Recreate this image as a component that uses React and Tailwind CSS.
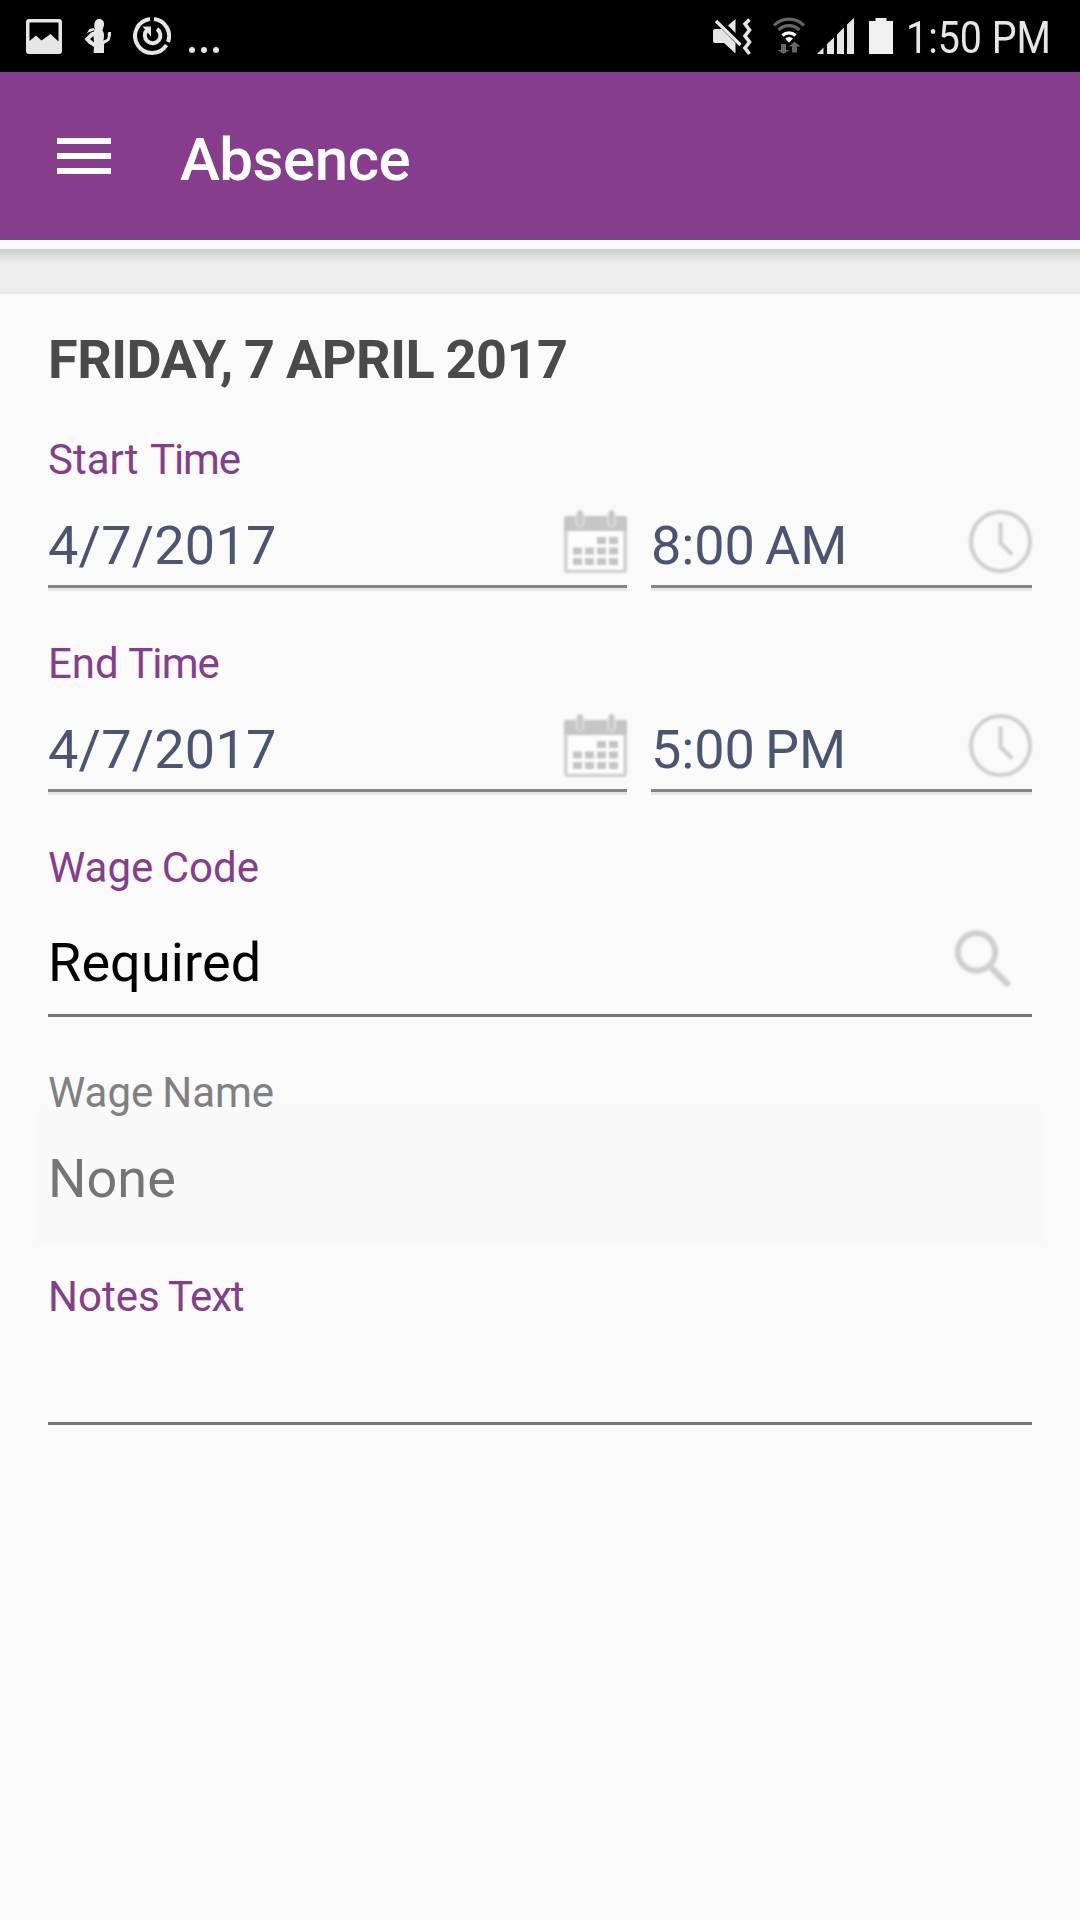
import React, { useState } from 'react'

const ImageIcon = () => (
    <svg width="36" height="35" viewBox="0 0 36 35">
        <path fill="#e6e6e6" fillRule="evenodd" d="M3 0h30a3 3 0 0 1 3 3v29a3 3 0 0 1-3 3H3a3 3 0 0 1-3-3V3a3 3 0 0 1 3-3zM3.500 3.500V22L10 16.500l5.500 5L24.500 15l8 7.500V3.500z" />
    </svg>
)

const RunnerIcon = () => (
    <svg width="28" height="36" viewBox="0 0 28 36">
        <path fill="#e6e6e6" d="M15 1c3.500 0 5.500 2.500 5 6-.3 2.500-1.500 3.500-1.500 5.500 1.200 1.500 1.500 3 1.500 5.500 0 2-.5 3-.5 4.500l3.500-1.500 1-3-.5-2 1-2h2.500v3l-1.500 5.500-5.500 3.500V35H9.500l.5-6-5.500-3.500-4-4.500 7.500-7.500L11 11.500C9.500 8 10 1 15 1z" />
        <path fill="#e6e6e6" d="M9.500 10l-4 1-2.500 4 5-.5 3-2.500z" />
        <path fill="#000" d="M9.500 18l-3.500 3 4 3.500z" />
        <path stroke="#000" strokeWidth="1" d="M2 15.800l8-2.800" />
    </svg>
)

const TimerIcon = () => (
    <svg width="38" height="38" viewBox="0 0 38 38" fill="none" stroke="#e6e6e6" strokeWidth="4">
        <path d="M17 2.100A17 17 0 1 0 33.500 28" />
        <path d="M21 2.100A17 17 0 0 1 35 25" />
        <path d="M24 12A7.800 7.800 0 1 1 14 13" />
        <path fill="#e6e6e6" stroke="none" d="M9.500 9.500h8.500v10z" />
    </svg>
)

const MuteIcon = () => (
    <svg width="39" height="38" viewBox="0 0 39 38">
        <path fill="#e6e6e6" d="M0 13q0-2 2-2h6.500L22.500 25v10.500L11 25H2q-2 0-2-2zM15 7.500L22.500 1v14z" />
        <path stroke="#e6e6e6" strokeWidth="3.200" d="M3 3l24.500 24" />
        <path stroke="#e6e6e6" strokeWidth="3.600" fill="none" d="M36.500 1.500l-4.500 4.500 4.500 6-4.500 6 4.500 6-4.500 6 4.500 6" />
    </svg>
)

const WifiIcon = () => (
    <svg width="32" height="37" viewBox="0 0 32 37" fill="none" strokeWidth="3.200">
        <path stroke="#666" d="M1 8.500a21 21 0 0 1 30 0M5.500 13a15 15 0 0 1 21 0" />
        <path stroke="#fff" d="M9.500 18.500a9.500 9.500 0 0 1 13 0" />
        <path fill="#fff" d="M12 21.500q4-3 8 0L16 25.500z" />
        <path fill="#666" d="M8 27h5v6h3.500L10.500 37 4.500 33H8zM19 35.500h5v-6h3.500L21.500 24.500 16 29.500h3z" />
    </svg>
)

const SignalIcon = () => (
    <svg width="37" height="36" viewBox="0 0 37 36" fill="#e6e6e6">
        <path d="M0 36l6.500-6.500V36zM10 26l7-6.500V36h-7zM20 16.500l7-7V36h-7zM30 6.500L37 0v36h-7z" />
    </svg>
)

const BatteryIcon = () => (
    <svg width="24" height="36" viewBox="0 0 24 36" fill="#f0f0f0">
        <path d="M6.500 0h11v3H24v33H0V3h6.500z" />
    </svg>
)

const CalendarIcon = () => (
    <svg width="63" height="63" viewBox="0 0 63 63" className="blur-[0.8px]">
        <rect x="1.800" y="8" width="59.400" height="53.500" rx="2" fill="#fdfdfd" stroke="#d0d0d0" strokeWidth="3.600" />
        <path fill="#c6c6c6" d="M2 6h59a2 2 0 0 1 2 2v13H0V8a2 2 0 0 1 2-2z" />
        <path d="M16 6v7M47.500 6v7" stroke="#dedede" strokeWidth="9" strokeLinecap="round" />
        <path d="M16 2.500v11M47.500 2.500v11" stroke="#c8c8c8" strokeWidth="5" strokeLinecap="round" />
        <path fill="#c4c4c4" d="M33 27h9v7h-9zM45 27h9v7h-9zM9 37.500h9v7H9zM21 37.500h9v7h-9zM33 37.500h9v7h-9zM45 37.500h9v7h-9zM9 48h9v7H9zM21 48h9v7h-9zM33 48h9v7h-9zM45 48h9v7h-9z" />
    </svg>
)

const ClockIcon = () => (
    <svg width="63" height="63" viewBox="0 0 63 63" fill="none" stroke="#cfcfcf" strokeWidth="4" className="blur-[0.8px]">
        <circle cx="31.500" cy="31.500" r="29.500" />
        <path d="M31.500 12.500V33L43 44.500" />
    </svg>
)

const SearchIcon = () => (
    <svg width="57" height="57" viewBox="0 0 57 57" fill="none" stroke="#d0d0d0" className="blur-[0.8px]">
        <circle cx="22.500" cy="22" r="18.700" strokeWidth="6" />
        <path d="M36 36.500l19 19" strokeWidth="6.500" />
    </svg>
)

const Label = ({ children, className = "text-[#853e8c]" }) => (
    <div className={`h-[50px] whitespace-nowrap text-[42px] leading-[50px] ${className}`}>
        {children}
    </div>
)

const PickerField = ({ value, icon, className }) => (
    <div className={`flex h-[106px] justify-between border-b-[3px] border-[#e6e6e6] ${className}`}>
        <div className="flex w-full justify-between border-b-[3px] border-[#848484] text-[54px] leading-[64px] text-[#4a5574]">
            <span className="pt-[29px]">{value}</span>
            <span className="pt-[25px]">{icon}</span>
        </div>
    </div>
)

const DateTimeRow = ({ label, date, time }) => (
    <div className="h-[204px]">
        <Label>{label}</Label>
        <div className="flex gap-6">
            <PickerField value={date} icon={<CalendarIcon />} className="w-[579px] tracking-[0.25px]" />
            <PickerField value={time} icon={<ClockIcon />} className="w-[381px] tracking-[-0.1px] [word-spacing:-3px]" />
        </div>
    </div>
)

const App = () => {
    const [formData] = useState({
        startDate: '4/7/2017',
        startTime: '8:00 AM',
        endDate: '4/7/2017',
        endTime: '5:00 PM',
        wageCode: 'Required',
        wageName: 'None'
    });

    return (
        <div className="flex h-[1920px] w-[1080px] flex-col overflow-hidden bg-[#fafafa] font-['Roboto',sans-serif]">
            <div className="flex h-[72px] justify-between bg-black pl-[26px] pr-[30px]">
                <div className="flex">
                    <div className="pt-[19px]"><ImageIcon /></div>
                    <div className="ml-[22px] pt-[18px]"><RunnerIcon /></div>
                    <div className="ml-[21px] pt-[17px]"><TimerIcon /></div>
                    <div className="ml-[18px] flex gap-[6px] pt-[47px]">
                        <span className="size-[6px] rounded-full bg-[#e6e6e6]" />
                        <span className="size-[6px] rounded-full bg-[#e6e6e6]" />
                        <span className="size-[6px] rounded-full bg-[#e6e6e6]" />
                    </div>
                </div>
                <div className="flex">
                    <div className="pt-[18px]"><MuteIcon /></div>
                    <div className="ml-[21px] pt-[17px]"><WifiIcon /></div>
                    <div className="ml-[12px] pt-[18px]"><SignalIcon /></div>
                    <div className="ml-[15px] pt-[18px]"><BatteryIcon /></div>
                    <div className="ml-[13px] w-[144px] pt-[11px]">
                        <span className="block origin-left scale-x-[0.875] whitespace-nowrap text-[45px] leading-[54px] text-[#e6e6e6]">1:50 PM</span>
                    </div>
                </div>
            </div>

            <div className="flex h-[168px] bg-[#863d8c] pl-[57px]">
                <div className="flex flex-col gap-[9px] pt-[66px]">
                    <span className="h-[6px] w-[54px] bg-white" />
                    <span className="h-[6px] w-[54px] bg-white" />
                    <span className="h-[6px] w-[54px] bg-white" />
                </div>
                <h1 className="ml-[69px] pt-[52px] text-[60px] font-medium leading-[72px] tracking-[-0.45px] text-white">Absence</h1>
            </div>

            <div className="mt-[9px] h-[45px] border-b-2 border-[#e9e9e9] bg-[#eee]">
                <div className="h-[14px] bg-linear-to-b from-[#cdcecd] to-[#eee]" />
            </div>

            <div className="flex flex-col px-12 pt-[34px]">
                <h2 className="mb-[43px] h-[64px] text-[54px] font-bold leading-[64px] tracking-[-0.5px] text-[#4a4a4a] [word-spacing:-1.5px]">FRIDAY, 7 APRIL 2017</h2>
                <DateTimeRow
                    label={<>Start <span className="ml-px tracking-[-1.1px]">Time</span></>}
                    date={formData.startDate}
                    time={formData.startTime}
                />
                <DateTimeRow
                    label={<>End <span className="-ml-px tracking-[-0.9px]">Time</span></>}
                    date={formData.endDate}
                    time={formData.endTime}
                />
                <div className="h-[225px]">
                    <Label className="text-[#853e8c] [word-spacing:-2px]">Wage Code</Label>
                    <div className="flex h-[124px] justify-between border-b-[3px] border-[#757575] pr-[21px]">
                        <span className="pt-[38px] text-[54px] leading-[64px] tracking-[0.1px] text-black">{formData.wageCode}</span>
                        <span className="pt-[37px]"><SearchIcon /></span>
                    </div>
                </div>
                <div className="h-[204px]">
                    <Label className="text-[#808080] [word-spacing:-1.5px]">Wage Name</Label>
                    <div className="-mx-3 -mt-2 h-[134px] bg-[#f9f9f9] px-3 pt-[37px] text-[54px] leading-[64px] text-[#757575]">
                        {formData.wageName}
                    </div>
                </div>
                <Label>Notes <span className="-ml-[2px] tracking-[-1.1px]">Text</span></Label>
                <div className="h-[103px] border-b-[3px] border-[#757575]" />
            </div>
        </div>
    )
}

export default App;
